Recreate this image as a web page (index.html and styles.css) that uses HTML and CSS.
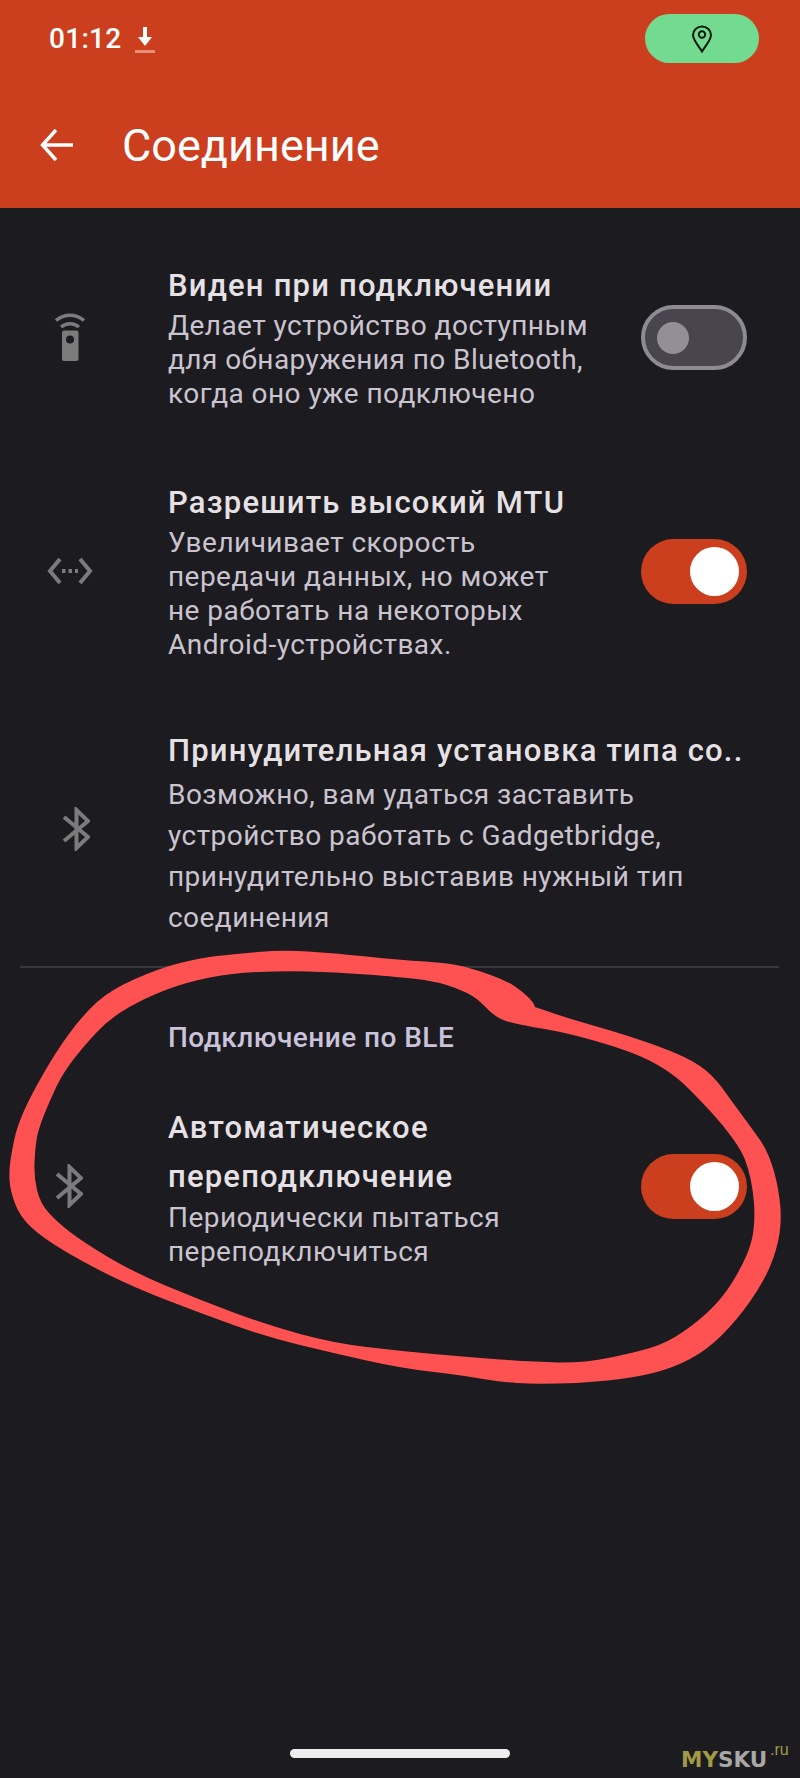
FILE: index.html
```html
<!DOCTYPE html>
<html lang="en">

<head>
    <meta charset="UTF-8">
    <meta name="viewport" content="width=device-width, initial-scale=1.0">
    <title>Соединение</title>
    <link rel="stylesheet" href="styles.css">
</head>

<body>
    <div class="screen">
        <header class="app-header">
            <div class="status-bar">
                <div class="status-left">
                    <span class="clock">01:12</span>
                    <svg class="download-icon" width="20" height="28" viewBox="0 0 20 28">
                        <path d="M8 1h4v10h5l-7 9-7-9h5z" fill="#fff" />
                        <rect x="0" y="24" width="20" height="3" fill="#e58f78" />
                    </svg>
                </div>
                <div class="location-pill">
                    <svg width="22" height="28" viewBox="0 0 22 28" fill="none" stroke="#0b1a10" stroke-width="2">
                        <path d="M11 26.5C7 20 2 15 2 10a9 8.5 0 0 1 18 0c0 5-5 10-9 16.5z" />
                        <circle cx="11" cy="9.5" r="3.2" />
                    </svg>
                </div>
            </div>
            <div class="toolbar">
                <svg class="back-icon" width="34" height="34" viewBox="0 0 34 34" fill="none" stroke="#fff" stroke-width="3.4">
                    <path d="M33 17H3M16 2 2.5 17 16 32" />
                </svg>
                <h1>Соединение</h1>
            </div>
        </header>

        <main class="settings">
            <div class="row row-visible">
                <div class="row-icon">
                    <svg width="32" height="50" viewBox="0 0 32 50">
                        <path d="M2 8.5C10 1.5 22 1.5 30 8.5" fill="none" stroke="#7b7b7b" stroke-width="3.5" />
                        <path d="M7 15C12 10.5 20 10.5 25 15" fill="none" stroke="#7b7b7b" stroke-width="3.5" />
                        <path d="M8 20.5a2 2 0 0 1 2-2h12.500a2 2 0 0 1 2 2V47a2 2 0 0 1-2 2H10a2 2 0 0 1-2-2z" fill="#7b7b7b" />
                        <circle cx="16" cy="27.5" r="4" fill="#1c1b1f" />
                    </svg>
                </div>
                <div class="row-text">
                    <div class="row-title">Виден при подключении</div>
                    <div class="row-sub">Делает устройство доступным<br>для обнаружения по Bluetooth,<br>когда оно уже подключено</div>
                </div>
                <div class="toggle toggle-off"><span class="thumb"></span></div>
            </div>

            <div class="row row-mtu">
                <div class="row-icon">
                    <svg width="46" height="28" viewBox="0 0 46 28" fill="none" stroke="#7b7b7b" stroke-width="4">
                        <path d="M13 2 3 14l10 12M33 2l10 12-10 12" />
                        <path d="M15 14h16" stroke-dasharray="3.5 3" />
                    </svg>
                </div>
                <div class="row-text">
                    <div class="row-title">Разрешить высокий MTU</div>
                    <div class="row-sub">Увеличивает скорость<br>передачи данных, но может<br>не работать на некоторых<br>Android-устройствах.</div>
                </div>
                <div class="toggle toggle-on"><span class="thumb"></span></div>
            </div>

            <div class="row row-force">
                <div class="row-icon row-icon-shift">
                    <svg width="28" height="44" viewBox="0 0 28 44" fill="none" stroke="#7b7b7b" stroke-width="4">
                        <path d="M2 10 26 30 14.500 41V3L26 14 2 34" />
                    </svg>
                </div>
                <div class="row-text">
                    <div class="row-title">Принудительная установка типа со..</div>
                    <div class="row-sub row-sub-loose">Возможно, вам удаться заставить<br>устройство работать с Gadgetbridge,<br>принудительно выставив нужный тип<br>соединения</div>
                </div>
            </div>

            <hr class="divider">
            <div class="section-label">Подключение по BLE</div>

            <div class="row row-ble">
                <div class="row-icon">
                    <svg width="28" height="44" viewBox="0 0 28 44" fill="none" stroke="#7b7b7b" stroke-width="4">
                        <path d="M2 10 26 30 14.500 41V3L26 14 2 34" />
                    </svg>
                </div>
                <div class="row-text">
                    <div class="row-title row-title-loose">Автоматическое<br>переподключение</div>
                    <div class="row-sub">Периодически пытаться<br>переподключиться</div>
                </div>
                <div class="toggle toggle-on"><span class="thumb"></span></div>
            </div>
        </main>

        <div class="home-bar"></div>

        <!-- hand drawn marker ring over the screenshot, outer edge then inner edge -->
        <svg class="scribble" width="800" height="1778" viewBox="0 0 800 1778">
            <path fill="#fe5252" fill-rule="evenodd" d="M366.5 956.5Q400 960 425 961.5Q450 963 463.5 966.5Q477 970 492 975.5Q507 981 515 986.5Q523 992 528 997Q533 1002 534 1004.5L535 1007L551 1012.5Q567 1018 600 1027.5Q633 1037 660 1047Q687 1057 700 1066Q713 1075 723 1089Q733 1103 743 1116.5Q753 1130 760 1140Q767 1150 772 1165Q777 1180 779.5 1198.5Q782 1217 779.5 1233.5Q777 1250 770 1266.5Q763 1283 750 1301.5Q737 1320 722 1335Q707 1350 690 1359Q673 1368 653 1373Q633 1378 608 1380.5Q583 1383 558 1383.5Q533 1384 516.5 1383Q500 1382 480 1378.5Q460 1375 430 1371.5Q400 1368 366.5 1360.5Q333 1353 300 1345Q267 1337 233.5 1325Q200 1313 166.5 1300Q133 1287 108 1274.5Q83 1262 63 1250Q43 1238 31.5 1227.5Q20 1217 15 1203.5Q10 1190 9.5 1180Q9 1170 10.5 1160Q12 1150 14.5 1138.5Q17 1127 23.5 1112Q30 1097 43.5 1073.5Q57 1050 70 1032.5Q83 1015 96.5 1002.5Q110 990 135 979Q160 968 180 963Q200 958 216.5 956Q233 954 258 952Q283 950 308 951.5Q333 953 366.5 956.5Z
            M366.5 974.5Q400 977 416.5 979Q433 981 445 984.5Q457 988 467 993Q477 998 485 1006.5Q493 1015 500 1018.5Q507 1022 520 1024.5Q533 1027 550 1030Q567 1033 592 1040Q617 1047 633.5 1053.5Q650 1060 663.5 1068.5Q677 1077 688.5 1088.5Q700 1100 711.5 1112.5Q723 1125 732 1137.5Q741 1150 744.5 1158.5Q748 1167 750.5 1178.5Q753 1190 754 1203.5Q755 1217 753.5 1230Q752 1243 746 1256.5Q740 1270 731.5 1283.5Q723 1297 711.5 1308.5Q700 1320 683.5 1331.5Q667 1343 650 1348Q633 1353 608 1358Q583 1363 558 1362.5Q533 1362 500 1359.5Q467 1357 433.5 1354Q400 1351 366.5 1347Q333 1343 300 1334Q267 1325 233.5 1312.5Q200 1300 166.5 1286Q133 1272 108 1257Q83 1242 70 1232Q57 1222 48.5 1212.5Q40 1203 37 1190Q34 1177 34.5 1163.5Q35 1150 36.5 1140Q38 1130 44 1115Q50 1100 56.5 1086.5Q63 1073 73 1060Q83 1047 96.5 1032.5Q110 1018 128.5 1007.5Q147 997 167 989.5Q187 982 210 977.5Q233 973 258 972Q283 971 308 971.5Q333 972 366.5 974.5Z" />
        </svg>

        <div class="watermark"><span class="mark-y">MY</span>SKU<sup>.ru</sup></div>
    </div>
</body>

</html>
```
FILE: styles.css
```css
html,
body {
    margin: 0;
    padding: 0;
}

body {
    font-family: Roboto, "Noto Sans", sans-serif;
    background-color: #1c1b1f;
    color: #e6e1e5;
}

.screen {
    position: relative;
    display: flex;
    flex-direction: column;
    width: 800px;
    height: 1778px;
    overflow: hidden;
    background-color: #1c1b1f;
}

.app-header {
    height: 208px;
    background-color: #cb3e1e;
    color: #fff;
}

.status-bar {
    display: flex;
    align-items: center;
    justify-content: space-between;
    height: 49px;
    padding: 14px 41px 0 49px;
}

.status-left {
    display: flex;
    align-items: center;
    gap: 13px;
}

.clock {
    font-size: 28px;
    font-weight: 500;
    letter-spacing: 0.3px;
}

.download-icon {
    margin-top: 2px;
}

.location-pill {
    display: flex;
    align-items: center;
    justify-content: center;
    width: 114px;
    height: 49px;
    border-radius: 25px;
    background-color: #72db8f;
}

.toolbar {
    display: flex;
    align-items: center;
    gap: 48px;
    height: 90px;
    margin-top: 37px;
    padding-left: 40px;
}

.toolbar h1 {
    margin: 0;
    font-size: 45px;
    font-weight: 400;
}

.settings {
    display: flex;
    flex-direction: column;
}

.row {
    display: flex;
    align-items: center;
}

.row-visible {
    margin-top: 55px;
}

.row-mtu {
    margin-top: 69px;
}

.row-force {
    margin-top: 66px;
}

.row-ble {
    margin-top: 47px;
}

.row-icon {
    display: flex;
    align-items: center;
    justify-content: center;
    flex: none;
    width: 139px;
    margin-right: 29px;
    box-sizing: border-box;
}

.row-icon-shift {
    padding: 0 0 8px 13px;
}

.row-ble .row-icon {
    padding-right: 2px;
}

.row-text {
    flex: 1;
    min-width: 0;
}

.row-title {
    font-size: 31px;
    font-weight: 500;
    line-height: 46px;
    letter-spacing: 1.2px;
    color: #e6e1e5;
    white-space: nowrap;
}

.row-title-loose {
    line-height: 49px;
}

.row-sub {
    font-size: 28px;
    line-height: 34px;
    letter-spacing: 0.45px;
    color: #cac4d0;
    white-space: nowrap;
}

.row-sub-loose {
    line-height: 41px;
}

.toggle {
    position: relative;
    flex: none;
    width: 106px;
    height: 65px;
    margin-right: 53px;
    box-sizing: border-box;
    border-radius: 33px;
}

.toggle-off {
    border: 4px solid #8e8b93;
    background-color: #49454f;
}

.toggle-off .thumb {
    position: absolute;
    left: 12px;
    top: 13px;
    width: 32px;
    height: 32px;
    border-radius: 50%;
    background-color: #938f99;
}

.toggle-on {
    background-color: #cb3e1e;
}

.toggle-on .thumb {
    position: absolute;
    right: 8px;
    top: 8px;
    width: 49px;
    height: 49px;
    border-radius: 50%;
    background-color: #fff;
}

.divider {
    width: 759px;
    height: 2px;
    margin: 28px 0 0 20px;
    border: none;
    background-color: #39383c;
}

.section-label {
    margin: 52px 0 0 168px;
    font-size: 28px;
    font-weight: 500;
    line-height: 36px;
    letter-spacing: 0.45px;
    color: #c9c3dc;
}

.home-bar {
    width: 220px;
    height: 9px;
    margin: auto auto 20px;
    border-radius: 5px;
    background-color: #eeeeee;
}

.scribble {
    position: absolute;
    left: 0;
    top: 0;
    pointer-events: none;
}

.watermark {
    position: absolute;
    left: 681px;
    top: 1750px;
    font-family: "DejaVu Sans", sans-serif;
    font-size: 21.5px;
    font-weight: 700;
    line-height: 20px;
    color: #a8a8a8;
}

.mark-y {
    color: #a39a45;
}

.watermark sup {
    position: absolute;
    left: 89px;
    top: -8px;
    font-family: "Liberation Sans", sans-serif;
    font-size: 16px;
    font-weight: 400;
    line-height: 16px;
    color: #a39a45;
}
```
